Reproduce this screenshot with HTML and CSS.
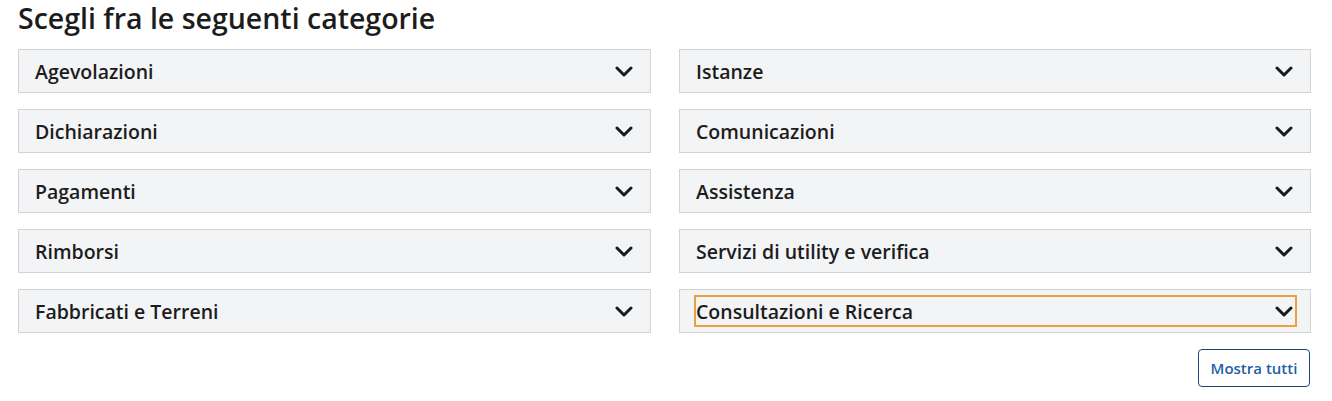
FILE: index.html
```html
<!DOCTYPE html>
<html lang="it">
<head>
<meta charset="utf-8">
<link rel="stylesheet" href="styles.css">
</head>
<body>
<div class="page">
  <h2 class="title">Scegli fra le seguenti categorie</h2>
  <div class="grid">
    <div class="card"><button class="head"><span>Agevolazioni</span><svg class="chev" viewBox="0 0 18 11"><path d="M2 2 L9 9 L16 2"/></svg></button></div>
    <div class="card"><button class="head"><span>Istanze</span><svg class="chev" viewBox="0 0 18 11"><path d="M2 2 L9 9 L16 2"/></svg></button></div>
    <div class="card"><button class="head"><span>Dichiarazioni</span><svg class="chev" viewBox="0 0 18 11"><path d="M2 2 L9 9 L16 2"/></svg></button></div>
    <div class="card"><button class="head"><span>Comunicazioni</span><svg class="chev" viewBox="0 0 18 11"><path d="M2 2 L9 9 L16 2"/></svg></button></div>
    <div class="card"><button class="head"><span>Pagamenti</span><svg class="chev" viewBox="0 0 18 11"><path d="M2 2 L9 9 L16 2"/></svg></button></div>
    <div class="card"><button class="head"><span>Assistenza</span><svg class="chev" viewBox="0 0 18 11"><path d="M2 2 L9 9 L16 2"/></svg></button></div>
    <div class="card"><button class="head"><span>Rimborsi</span><svg class="chev" viewBox="0 0 18 11"><path d="M2 2 L9 9 L16 2"/></svg></button></div>
    <div class="card"><button class="head"><span>Servizi di utility e verifica</span><svg class="chev" viewBox="0 0 18 11"><path d="M2 2 L9 9 L16 2"/></svg></button></div>
    <div class="card"><button class="head"><span>Fabbricati e Terreni</span><svg class="chev" viewBox="0 0 18 11"><path d="M2 2 L9 9 L16 2"/></svg></button></div>
    <div class="card"><button class="head focused"><span>Consultazioni e Ricerca</span><svg class="chev" viewBox="0 0 18 11"><path d="M2 2 L9 9 L16 2"/></svg></button></div>
  </div>
  <div class="actions">
    <button class="more">Mostra tutti</button>
  </div>
</div>
</body>
</html>
```
FILE: styles.css
```css
html, body {
  margin: 0;
  padding: 0;
  background: #ffffff;
}
.page {
  width: 1292px;
  padding-left: 18px;
  font-family: "Open Sans", "Lato", sans-serif;
  color: #1a1a1a;
}
.title {
  margin: 0;
  font-size: 28.5px;
  line-height: 36px;
  font-weight: 600;
  color: #1c1c1c;
}
.grid {
  margin-top: 13px;
  display: grid;
  grid-template-columns: 633px 632px;
  column-gap: 28px;
  row-gap: 16px;
}
.card {
  height: 44px;
  box-sizing: border-box;
  border: 1px solid #d3d3d3;
  background: #f3f4f6;
  padding: 5px 13px 5px 14px;
}
.head {
  width: 100%;
  height: 32px;
  box-sizing: border-box;
  display: flex;
  align-items: center;
  justify-content: space-between;
  padding: 0 2px 0 0;
  margin: 0;
  border: 2px solid transparent;
  background: transparent;
  font-family: inherit;
  font-size: 19.5px;
  font-weight: 600;
  color: #1c1c1c;
  text-align: left;
}
.head.focused {
  border-color: #e9a23c;
}
.chev {
  width: 18px;
  height: 11px;
  fill: none;
  stroke: #1a1a1a;
  stroke-width: 3;
  stroke-linecap: round;
  stroke-linejoin: round;
}
.actions {
  display: flex;
  justify-content: flex-end;
  margin-top: 16px;
}
.more {
  width: 112px;
  height: 38px;
  border: 1px solid #17477a;
  border-radius: 4px;
  background: #ffffff;
  color: #1f5fa6;
  font-family: inherit;
  font-size: 15px;
  font-weight: 600;
  padding: 0;
}
```
